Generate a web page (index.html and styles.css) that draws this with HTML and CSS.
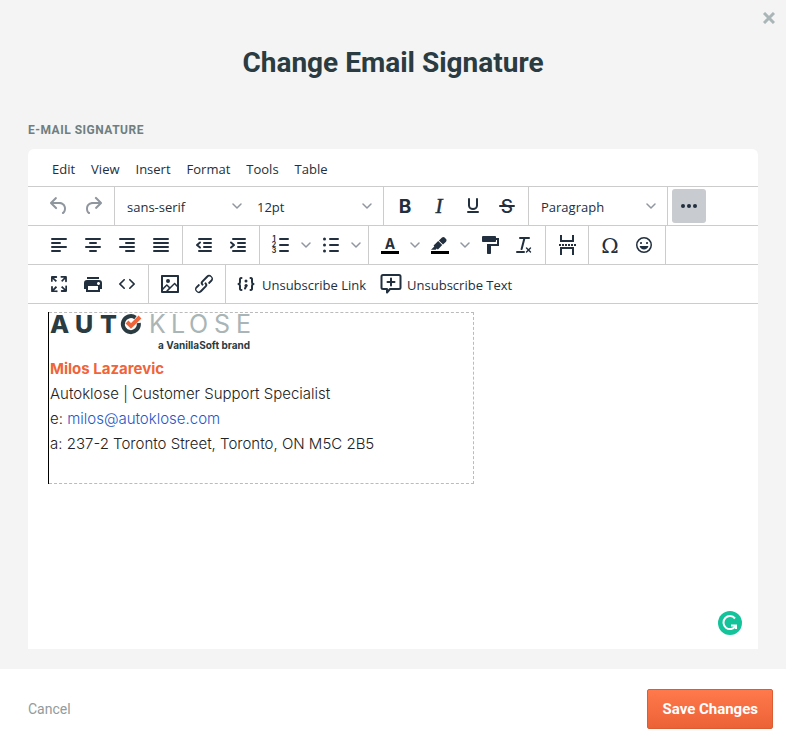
FILE: index.html
```html
<!DOCTYPE html>
<html lang="en">
<head>
    <meta charset="UTF-8">
    <meta name="viewport" content="width=device-width, initial-scale=1.0">
    <title>Change Email Signature</title>
    <link rel="stylesheet" href="styles.css">
</head>
<body>
  <div class="modal">
    <div class="modal-body">
        <button class="close" aria-label="Close">
            <svg width="12" height="12" viewBox="0 0 12 12"><path d="M1 1l10 10M11 1l-10 10"/></svg>
        </button>
        <h1>Change Email Signature</h1>
        <h2 class="field-label" id="signature-label">E-MAIL SIGNATURE</h2>

        <div class="editor">
            <div class="menubar">
                <button>Edit</button>
                <button>View</button>
                <button>Insert</button>
                <button>Format</button>
                <button>Tools</button>
                <button>Table</button>
            </div>

            <div class="toolbar">
                <div class="group">
                    <button class="tool" aria-label="Undo" disabled>
                        <svg class="icon" viewBox="0 0 24 24"><path d="M6.4 8H12c3.7 0 6.2 2 6.8 5.1.6 2.7-.4 5.6-2.3 6.8a1 1 0 0 1-1-1.8c1.1-.6 1.8-2.7 1.4-4.6-.5-2.1-2.1-3.5-4.9-3.5H6.4l3.3 3.3a1 1 0 1 1-1.4 1.4l-5-5a1 1 0 0 1 0-1.4l5-5a1 1 0 0 1 1.4 1.4L6.4 8z"/></svg>
                    </button>
                    <button class="tool" aria-label="Redo" disabled>
                        <svg class="icon" viewBox="0 0 24 24"><path d="M17.6 10H12c-2.8 0-4.4 1.4-4.9 3.5-.4 2 .3 4 1.4 4.6a1 1 0 1 1-1 1.8c-2-1.2-2.9-4.1-2.3-6.8.6-3 3-5.1 6.8-5.1h5.6l-3.3-3.3a1 1 0 1 1 1.4-1.4l5 5a1 1 0 0 1 0 1.4l-5 5a1 1 0 0 1-1.4-1.4l3.3-3.3z"/></svg>
                    </button>
                </div>
                <div class="group">
                    <div class="select">
                        <select aria-label="Font"><option>sans-serif</option></select>
                        <svg class="chevron" viewBox="0 0 10 10"><path d="M1 3l4 4 4-4"/></svg>
                    </div>
                    <div class="select">
                        <select aria-label="Font size"><option>12pt</option></select>
                        <svg class="chevron" viewBox="0 0 10 10"><path d="M1 3l4 4 4-4"/></svg>
                    </div>
                </div>
                <div class="group">
                    <button class="tool" aria-label="Bold">
                        <svg class="icon" viewBox="0 0 24 24"><text class="letter-bold" x="12" y="19">B</text></svg>
                    </button>
                    <button class="tool" aria-label="Italic">
                        <svg class="icon" viewBox="0 0 24 24"><text class="letter-italic" x="12" y="19">I</text></svg>
                    </button>
                    <button class="tool" aria-label="Underline">
                        <svg class="icon" viewBox="0 0 24 24"><path class="line" d="M8 5v6.500a4 3.500 0 0 0 8 0V5M7 18h10"/></svg>
                    </button>
                    <button class="tool" aria-label="Strikethrough">
                        <svg class="icon" viewBox="0 0 24 24"><text class="letter-strike" x="12" y="19">S</text><rect x="4" y="11" width="16" height="2" rx="1"/></svg>
                    </button>
                </div>
                <div class="group">
                    <div class="select">
                        <select aria-label="Block format"><option>Paragraph</option></select>
                        <svg class="chevron" viewBox="0 0 10 10"><path d="M1 3l4 4 4-4"/></svg>
                    </div>
                </div>
                <div class="group">
                    <button class="tool active" aria-label="More">
                        <svg class="icon" viewBox="0 0 24 24"><circle cx="6" cy="12" r="2"/><circle cx="12" cy="12" r="2"/><circle cx="18" cy="12" r="2"/></svg>
                    </button>
                </div>
            </div>

            <div class="toolbar">
                <div class="group">
                    <button class="tool" aria-label="Align left">
                        <svg class="icon" viewBox="0 0 24 24"><path class="line" d="M5 6h14M5 10h8M5 14h14M5 18h8"/></svg>
                    </button>
                    <button class="tool" aria-label="Align center">
                        <svg class="icon" viewBox="0 0 24 24"><path class="line" d="M5 6h14M9 10h6M5 14h14M9 18h6"/></svg>
                    </button>
                    <button class="tool" aria-label="Align right">
                        <svg class="icon" viewBox="0 0 24 24"><path class="line" d="M5 6h14M11 10h8M5 14h14M11 18h8"/></svg>
                    </button>
                    <button class="tool" aria-label="Justify">
                        <svg class="icon" viewBox="0 0 24 24"><path class="line" d="M5 6h14M5 10h14M5 14h14M5 18h14"/></svg>
                    </button>
                </div>
                <div class="group">
                    <button class="tool" aria-label="Decrease indent">
                        <svg class="icon" viewBox="0 0 24 24"><path class="line" d="M7 6h12M12 10h7M12 14h7M7 18h12M8 9.500L5 12l3 2.500"/></svg>
                    </button>
                    <button class="tool" aria-label="Increase indent">
                        <svg class="icon" viewBox="0 0 24 24"><path class="line" d="M7 6h12M12 10h7M12 14h7M7 18h12M5 9.500L8 12l-3 2.500"/></svg>
                    </button>
                </div>
                <div class="group">
                    <button class="tool" aria-label="Numbered list">
                        <svg class="icon" viewBox="0 0 24 24"><path class="line" d="M11 6h8M11 12h8M11 18h8"/><g class="digits"><text x="5" y="8">1</text><text x="5" y="14">2</text><text x="5" y="20">3</text></g></svg>
                    </button>
                    <button class="arrow" aria-label="Numbered list styles"><svg class="chevron" viewBox="0 0 10 10"><path d="M1 3l4 4 4-4"/></svg></button>
                    <button class="tool" aria-label="Bullet list">
                        <svg class="icon" viewBox="0 0 24 24"><path class="line" d="M11 6h8M11 12h8M11 18h8"/><circle cx="5.500" cy="6" r="1.500"/><circle cx="5.500" cy="12" r="1.500"/><circle cx="5.500" cy="18" r="1.500"/></svg>
                    </button>
                    <button class="arrow" aria-label="Bullet list styles"><svg class="chevron" viewBox="0 0 10 10"><path d="M1 3l4 4 4-4"/></svg></button>
                </div>
                <div class="group">
                    <button class="tool" aria-label="Text color">
                        <svg class="icon" viewBox="0 0 24 24"><text class="letter-color" x="12" y="16">A</text><rect class="swatch" x="3" y="18" width="18" height="3"/></svg>
                    </button>
                    <button class="arrow" aria-label="Pick text color"><svg class="chevron" viewBox="0 0 10 10"><path d="M1 3l4 4 4-4"/></svg></button>
                    <button class="tool" aria-label="Background color">
                        <svg class="icon" viewBox="0 0 24 24"><path d="M7.700 16.700H3l3.300-3.300-.7-.8L10.200 8l4 4.100-4 4.200c-.2.2-.6.2-.8 0l-.6-.7-1.100 1.100zM10.900 7.400l3.100-2.900a2 2 0 0 1 2.600 0L18 6c.7.7.7 2 0 2.700l-3 2.800z"/><rect class="swatch" x="3" y="18" width="18" height="3"/></svg>
                    </button>
                    <button class="arrow" aria-label="Pick background color"><svg class="chevron" viewBox="0 0 10 10"><path d="M1 3l4 4 4-4"/></svg></button>
                    <button class="tool" aria-label="Format painter">
                        <svg class="icon" viewBox="0 0 24 24"><path d="M18 5V4c0-.5-.4-1-1-1H5a1 1 0 0 0-1 1v4c0 .6.5 1 1 1h12c.6 0 1-.4 1-1V7h1v4H9v9c0 .6.4 1 1 1h2c.6 0 1-.4 1-1v-7h8V5h-3z"/></svg>
                    </button>
                    <button class="tool" aria-label="Clear formatting">
                        <svg class="icon" viewBox="0 0 24 24"><path d="M13.2 6a1 1 0 0 1 0 .2l-2.600 10a1 1 0 0 1-1 .8h-.2a.8.8 0 0 1-.8-1l2.600-10H8a1 1 0 1 1 0-2h9a1 1 0 0 1 0 2h-3.800zM5 18h7a1 1 0 0 1 0 2H5a1 1 0 0 1 0-2zm13 1.500L16.500 18 15 19.500a.7.7 0 0 1-1-1l1.500-1.500-1.500-1.500a.7.7 0 0 1 1-1l1.500 1.500 1.500-1.500a.7.7 0 0 1 1 1L17.500 17l1.500 1.500a.7.7 0 0 1-1 1z"/></svg>
                    </button>
                </div>
                <div class="group">
                    <button class="tool" aria-label="Page break">
                        <svg class="icon" viewBox="0 0 24 24"><path class="line square" d="M6 2v6h12V2M6 22v-7h12v7"/><path class="dashes" d="M4 12h17"/></svg>
                    </button>
                </div>
                <div class="group">
                    <button class="tool" aria-label="Special character">
                        <svg class="icon" viewBox="0 0 24 24"><text class="letter-omega" x="12" y="20">&#937;</text></svg>
                    </button>
                    <button class="tool" aria-label="Emoticons">
                        <svg class="icon" viewBox="0 0 24 24"><path d="M9 11c.6 0 1-.4 1-1s-.4-1-1-1a1 1 0 0 0-1 1c0 .6.4 1 1 1zm6 0c.6 0 1-.4 1-1s-.4-1-1-1a1 1 0 0 0-1 1c0 .6.4 1 1 1zm-3 5.500c2.100 0 4-1.500 4.400-3.500H7.600c.5 2 2.300 3.500 4.400 3.500zM12 4a8 8 0 1 0 0 16 8 8 0 0 0 0-16zm0 14.500a6.500 6.500 0 1 1 0-13 6.500 6.500 0 0 1 0 13z"/></svg>
                    </button>
                </div>
                <div class="group"></div>
            </div>

            <div class="toolbar">
                <div class="group">
                    <button class="tool" aria-label="Fullscreen">
                        <svg class="icon" viewBox="0 0 24 24"><path d="M15.300 10l-1.200-1.300 2.900-3h-2.300a.9.9 0 1 1 0-1.700H19c.5 0 .9.4.9.9v4.400a.9.9 0 1 1-1.800 0V7l-2.900 3zm0 4l3 3v-2.300a.9.9 0 1 1 1.700 0V19c0 .5-.4.9-.9.9h-4.400a.9.9 0 1 1 0-1.800H17l-3-2.900 1.300-1.200zM10 15.400l-2.900 3h2.300a.9.9 0 1 1 0 1.700H5a.9.9 0 0 1-.9-.9v-4.400a.9.9 0 1 1 1.800 0V17l2.900-3 1.200 1.300zM8.700 10L5.700 7v2.300a.9.9 0 0 1-1.700 0V5c0-.5.4-.9.9-.9h4.400a.9.9 0 0 1 0 1.800H7l3 2.900-1.300 1.200z"/></svg>
                    </button>
                    <button class="tool" aria-label="Print">
                        <svg class="icon" viewBox="0 0 24 24"><path d="M18 8H6a3 3 0 0 0-3 3v6h2v3h14v-3h2v-6a3 3 0 0 0-3-3zm-1 10H7v-4h10v4zm.5-5c-.8 0-1.500-.7-1.500-1.500s.7-1.500 1.500-1.500 1.500.7 1.500 1.500-.7 1.500-1.500 1.500zm.5-8H6v2h12V5z"/></svg>
                    </button>
                    <button class="tool" aria-label="Source code">
                        <svg class="icon" viewBox="0 0 24 24"><path d="M9.800 15.700c.3.3.3.8 0 1-.3.4-.9.4-1.200 0l-4.400-4.100a.8.8 0 0 1 0-1.200l4.400-4.200c.3-.3.9-.3 1.200 0 .3.3.3.8 0 1.100L6 12l3.800 3.700zM14.200 15.700c-.3.3-.3.8 0 1 .4.4.9.4 1.200 0l4.400-4.100c.3-.3.3-.9 0-1.200l-4.400-4.200a.8.8 0 0 0-1.200 0c-.3.3-.3.8 0 1.100L18 12l-3.800 3.700z"/></svg>
                    </button>
                </div>
                <div class="group">
                    <button class="tool" aria-label="Insert image">
                        <svg class="icon" viewBox="0 0 24 24"><path fill-rule="evenodd" d="M5 15.700l3.300-3.200c.3-.3.7-.3 1 0L12 15l4.100-4c.3-.4.8-.4 1 0l1.900 1.900V5H5v10.700zM5 18v1h3l2.800-2.900-2-2L5 17.900zm14-3l-2.500-2.400-6.400 6.400H19v-4zM4 3h16c.6 0 1 .4 1 1v16c0 .6-.4 1-1 1H4a1 1 0 0 1-1-1V4c0-.6.4-1 1-1zm6 8a2 2 0 1 0 0-4 2 2 0 0 0 0 4z"/></svg>
                    </button>
                    <button class="tool" aria-label="Insert link">
                        <svg class="icon" viewBox="0 0 24 24"><path d="M6.200 12.300a1 1 0 0 1 1.400 1.400l-2.100 2a2 2 0 1 0 2.700 2.800l4.800-4.800a1 1 0 0 0 0-1.400 1 1 0 1 1 1.400-1.300 2.900 2.900 0 0 1 0 4L9.600 20a3.900 3.900 0 0 1-5.500-5.500l2-2zm11.600-.6a1 1 0 0 1-1.400-1.400l2-2a2 2 0 1 0-2.600-2.800L11 10.300a1 1 0 0 0 0 1.400A1 1 0 1 1 9.600 13a2.900 2.900 0 0 1 0-4L14.400 4a3.900 3.900 0 0 1 5.500 5.500l-2 2z"/></svg>
                    </button>
                </div>
                <div class="group">
                    <button class="text-tool">
                        <svg class="icon" viewBox="0 0 24 24"><path class="line" d="M7.500 6C5.500 6 6 7.500 6 9.500S5 12 4.500 12c.5 0 1.500.5 1.500 2.500S5.500 18 7.500 18M16.500 6c2 0 1.500 1.500 1.500 3.500s1 2.500 1.500 2.500c-.5 0-1.500.5-1.500 2.500s.5 3.500-1.500 3.500M12.500 13.500l-1.500 3"/><circle cx="12" cy="9" r="1.500"/><circle cx="12" cy="13.500" r="1.500"/></svg>
                        <span>Unsubscribe Link</span>
                    </button>
                    <button class="text-tool">
                        <svg class="icon" viewBox="0 0 24 24"><path class="line" d="M4 3h16a1.500 1.500 0 0 1 1.500 1.500v11A1.500 1.500 0 0 1 20 17h-9l-3 3.500V17H4a1.500 1.500 0 0 1-1.500-1.500v-11A1.500 1.500 0 0 1 4 3zM12 6.500v7M8.500 10h7"/></svg>
                        <span>Unsubscribe Text</span>
                    </button>
                </div>
            </div>

            <div class="content" contenteditable="true" spellcheck="false" role="textbox" aria-multiline="true" aria-labelledby="signature-label">
                <table class="signature">
                    <tr>
                        <td>
                            <svg class="logo" width="202" height="43" viewBox="0 0 202 43">
                                <g class="logo-dark"><text x="0 25 50" y="20">AUT</text></g>
                                <path class="logo-ring" d="M85.500 4.600A8 8 0 1 0 88.800 10"/>
                                <path class="logo-check" d="M77 9l4 4 9-9"/>
                                <g class="logo-light"><text x="99 121 139 164 186" y="20">KLOSE</text></g>
                                <text class="logo-brand" x="200" y="36">a VanillaSoft brand</text>
                            </svg>
                            <p class="name">Milos Lazarevic</p>
                            <p>Autoklose | Customer Support Specialist</p>
                            <p>e: <a href="mailto:milos@autoklose.com">milos@autoklose.com</a></p>
                            <p>a: 237-2 Toronto Street, Toronto, ON M5C 2B5</p>
                            <p><br></p>
                        </td>
                    </tr>
                </table>
            </div>
            <div class="editor-foot">
                <button class="checker" aria-label="Check grammar">
                    <svg width="24" height="24" viewBox="0 0 24 24"><circle cx="12" cy="12" r="12"/><path d="M17 7.500A6.500 6.500 0 1 0 17.500 15M13 14.500H18V18"/></svg>
                </button>
            </div>
        </div>
    </div>

    <div class="modal-footer">
        <button class="cancel">Cancel</button>
        <button class="save">Save Changes</button>
    </div>
  </div>
</body>
</html>
```
FILE: styles.css
```css
*{
    margin: 0;
    padding: 0;
    box-sizing: border-box;
}
body{
    background: #f4f4f4;
    font-family: Roboto, "Liberation Sans", sans-serif;
    color: #2a3b41;
}
button{
    border: none;
    background: none;
    font: inherit;
    color: inherit;
    cursor: pointer;
}
.modal{
    min-height: 100vh;
    display: flex;
    flex-direction: column;
}
.modal-body{
    flex: 1;
    display: flex;
    flex-direction: column;
    padding: 12px 28px 20px;
}
.close{
    align-self: flex-end;
    margin-right: -17px;
    height: 12px;
}
.close svg{
    display: block;
    fill: none;
    stroke: #a9b5b6;
    stroke-width: 3;
}
h1{
    margin: 21px 0 41px;
    font-size: 28px;
    line-height: 36px;
    font-weight: 700;
    text-align: center;
}
.field-label{
    margin-bottom: 11px;
    font-size: 12px;
    line-height: 16px;
    font-weight: 700;
    letter-spacing: 0.5px;
    color: #6f7e80;
}

/* editor */
.editor{
    flex: 1;
    display: flex;
    flex-direction: column;
    background: white;
    border-radius: 6px 6px 0 0;
    font-family: "Open Sans", "Noto Sans", sans-serif;
    font-size: 13px;
    color: #222f3e;
}
.menubar{
    display: flex;
    gap: 16px;
    height: 37px;
    padding: 2px 24px 0;
}
.toolbar{
    display: flex;
    height: 39px;
    padding-left: 9px;
    border-top: 1px solid #ccc;
}
.group{
    display: flex;
    align-items: center;
    padding: 0 4px;
    border-left: 1px solid #ccc;
}
.group:first-child{
    border-left-color: transparent;
}
.tool{
    display: flex;
    justify-content: center;
    align-items: center;
    width: 34px;
    height: 34px;
    border-radius: 3px;
}
.tool.active{
    background: #c8cbcf;
}
.tool:disabled{
    opacity: 0.5;
}
.arrow{
    display: flex;
    justify-content: center;
    width: 16px;
}
.text-tool{
    display: flex;
    align-items: center;
    gap: 4px;
    height: 34px;
    padding: 0 9px 0 4px;
}
.text-tool span{
    padding-top: 2px;
}
.select{
    display: grid;
    align-items: center;
    width: 130px;
}
.select select, .select .chevron{
    grid-area: 1 / 1;
}
.select select{
    appearance: none;
    height: 34px;
    padding: 2px 24px 0 8px;
    border: none;
    background: none;
    font: inherit;
    color: inherit;
}
.select .chevron{
    justify-self: end;
    margin-right: 7px;
    pointer-events: none;
}
.icon{
    width: 24px;
    height: 24px;
    fill: #222f3e;
}
.icon .line{
    fill: none;
    stroke: #222f3e;
    stroke-width: 2;
    stroke-linecap: round;
    stroke-linejoin: round;
}
.icon .square{
    stroke-linecap: butt;
    stroke-linejoin: miter;
}
.icon .dashes{
    stroke: #222f3e;
    stroke-width: 2;
    stroke-dasharray: 2 1;
}
.icon .swatch{
    fill: black;
}
.icon text{
    text-anchor: middle;
}
.letter-bold{
    font: 700 19px Inter, sans-serif;
}
.letter-italic{
    font: italic 400 21px "Liberation Serif", serif;
    stroke: #222f3e;
    stroke-width: 0.5;
}
.letter-strike{
    font: 500 19px Inter, sans-serif;
}
.letter-color{
    font: 700 14px Inter, sans-serif;
}
.letter-omega{
    font: 400 21px "DejaVu Serif", serif;
}
.digits{
    font: 700 7px Inter, sans-serif;
}
.chevron{
    width: 10px;
    height: 10px;
    fill: none;
    stroke: #9097a0;
    stroke-width: 1.5;
    stroke-linecap: round;
    stroke-linejoin: round;
}

/* signature */
.content{
    flex: 1;
    padding: 8px 20px;
    border-top: 1px solid #ccc;
    outline: none;
}
.signature{
    width: 426px;
    max-width: 100%;
    border: 1px dashed #bbb;
    border-left: 1px solid black;
    border-collapse: collapse;
    font-family: Inter, "Open Sans", sans-serif;
    font-size: 15px;
    line-height: 25px;
    font-weight: 300;
    color: #222;
}
.signature td{
    padding: 0 1px 2px;
}
.signature .name{
    font-weight: 700;
    color: #f0643a;
}
.signature a{
    color: #2457c5;
    text-decoration: none;
}
.logo{
    display: block;
    overflow: visible;
}
.logo-dark, .logo-light{
    font-family: Inter, sans-serif;
    font-size: 25px;
}
.logo-dark{
    font-weight: 800;
    fill: #2a3b41;
}
.logo-light{
    font-weight: 400;
    fill: #a9b5b6;
}
.logo-ring{
    fill: none;
    stroke: #2a3b41;
    stroke-width: 4;
}
.logo-check{
    fill: none;
    stroke: #f0643a;
    stroke-width: 4;
}
.logo-brand{
    font-size: 10px;
    font-weight: 700;
    text-anchor: end;
    fill: #2a3b41;
}
.editor-foot{
    display: flex;
    justify-content: flex-end;
    padding: 0 16px 14px;
}
.checker svg{
    display: block;
    fill: #15c39a;
}
.checker path{
    fill: none;
    stroke: white;
    stroke-width: 2;
}

/* footer */
.modal-footer{
    display: flex;
    justify-content: space-between;
    align-items: center;
    padding: 20px 13px 11px 28px;
    background: white;
}
.cancel{
    font-size: 14px;
    color: #929b9c;
}
.save{
    height: 40px;
    padding: 0 14px;
    border: 1px solid #dc5c33;
    border-radius: 2px;
    background: linear-gradient(#ff794c, #ec6236);
    font-size: 15px;
    font-weight: 700;
    color: white;
}
.save:hover{
    background: #ec6236;
}
```
